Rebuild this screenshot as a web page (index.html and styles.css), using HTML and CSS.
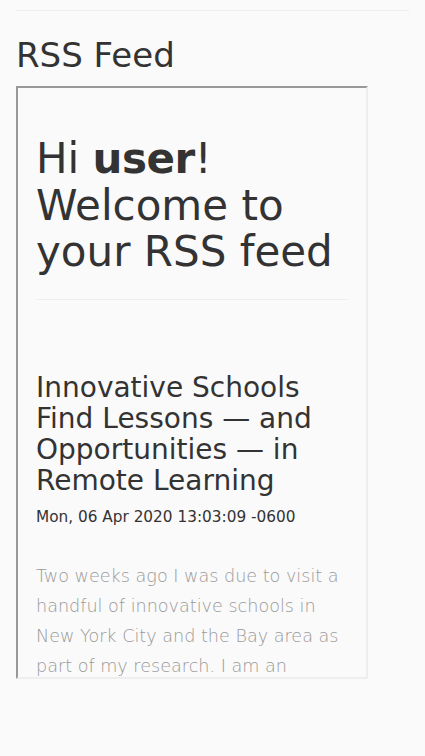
FILE: index.html
```html
<!DOCTYPE html>
<html lang="en">
<head>
<meta charset="utf-8">
<title>RSS Feed</title>
<link rel="stylesheet" href="styles.css">
</head>
<body>
<main class="page">
  <hr class="rule-top">
  <h1 class="page-title">RSS Feed</h1>
  <div class="feed-frame">
    <div class="feed-body">
      <h2 class="welcome">Hi <strong>user</strong>! Welcome to your RSS feed</h2>
      <hr class="rule-inner">
      <article class="entry">
        <h3 class="entry-title">Innovative Schools Find Lessons — and Opportunities — in Remote Learning</h3>
        <div class="entry-date">Mon, 06 Apr 2020 13:03:09 -0600</div>
        <p class="entry-text">Two weeks ago I was due to visit a handful of innovative schools in New York City and the Bay area as part of my research. I am an educator and researcher who believes the future of learning is already here.</p>
      </article>
    </div>
  </div>
</main>
</body>
</html>
```
FILE: styles.css
```css
html, body {
  margin: 0;
  padding: 0;
  background: #fafafa;
}
body {
  font-family: "DejaVu Sans", "Open Sans", sans-serif;
  color: #333;
}
.page {
  padding: 0 16px;
}
.rule-top {
  margin: 10px 0 0;
  border: 0;
  border-top: 1px solid #eeeeee;
  height: 0;
}
.page-title {
  margin: 21px 0 8px;
  font-size: 34px;
  line-height: 46px;
  font-weight: 400;
  color: #333;
}
.feed-frame {
  width: 352px;
  height: 593px;
  box-sizing: border-box;
  border-style: solid;
  border-width: 2px;
  border-color: #999 #eee #eee #999;
  overflow: hidden;
}
.feed-body {
  padding: 0 18px;
}
.welcome {
  margin: 0;
  padding-top: 48px;
  font-size: 42px;
  line-height: 46.5px;
  font-weight: 400;
  color: #333;
}
.welcome strong {
  font-weight: 700;
  letter-spacing: -0.5px;
}
.rule-inner {
  margin: 23px 0 0;
  border: 0;
  border-top: 1px solid #eeeeee;
  height: 0;
}
.entry-title {
  margin: 72.5px 0 0;
  font-size: 28px;
  line-height: 31px;
  font-weight: 400;
  color: #333;
}
.entry-date {
  margin-top: 11px;
  font-size: 15.3px;
  line-height: 20px;
  color: #333;
}
.entry-text {
  margin: 34px 0 0;
  font-size: 17.6px;
  line-height: 30px;
  font-weight: 200;
  color: #999;
}
```
